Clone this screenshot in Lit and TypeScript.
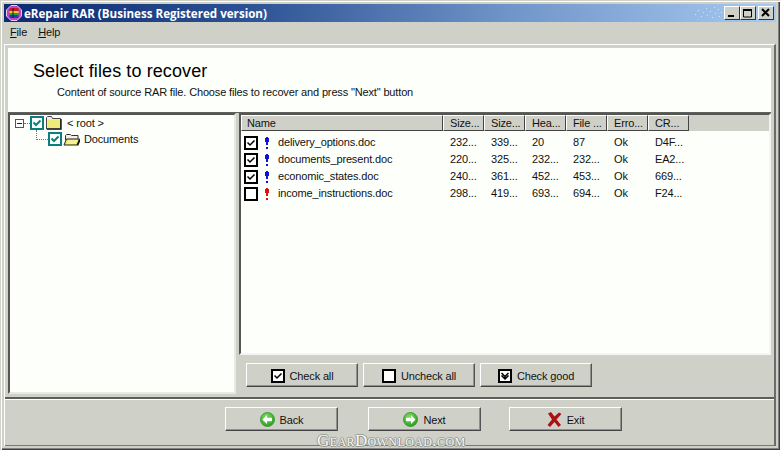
import { LitElement, html, css, svg } from "lit";
import { customElement } from "lit/decorators.js";

const check = (s: number, tone = "#000") => html`<svg class="ck" width=${s} height=${s} viewBox="0 0 14 14"><rect x="1" y="1" width="12" height="12" fill="#fff" stroke=${tone} stroke-width="2"/><path d="M3.500 6.500 6 9l4.500-4.500" fill="none" stroke=${tone} stroke-width="1.500"/></svg>`;
const empty = (s: number) => html`<svg class="ck" width=${s} height=${s} viewBox="0 0 14 14"><rect x="1" y="1" width="12" height="12" fill="#fff" stroke="#000" stroke-width="2"/></svg>`;
const good = html`<svg class="ck" width="14" height="14" viewBox="0 0 14 14"><rect x="1" y="1" width="12" height="12" fill="#fff" stroke="#000" stroke-width="2"/><path d="M3.500 4 7 7.500 10.500 4M3.500 6.500 7 10l3.500-3.500M7 8v3" fill="none" stroke="#000" stroke-width="1.500"/></svg>`;
const bang = (c: string) => html`<svg class="bang" width="4" height="12" viewBox="0 0 4 12"><path d="M1 0h2v1h1v4H3v3H1V5H0V1h1z" fill=${c}/><path d="M1 10h2v2H1z" fill=${c}/></svg>`;
const folder = (open: boolean) => html`<svg class="fold" width="17" height="14" viewBox="0 0 17 14">
  ${open
    ? svg`<path d="M2.500 8V3.500l1-1h4l1 1h6.500V7" fill="#f0f0e4" stroke="#333"/><path d="M1 13 3.500 7H16.500l-2.500 6z" fill="#eeea60" stroke="#222"/><path d="M14.500 13.500 17 7.500" stroke="#111" stroke-width="1.500"/><path d="M5 9h9M4 11h9" stroke="#fafad0"/>`
    : svg`<path d="M1.500 13V1.500l1-1h4l1 2h8v10.500z" fill="#f0f0e4" stroke="#444"/><path d="M2.500 3.500h12.500v8.500H2.500z" fill="#ecea78"/><path d="M16 3v10H2" fill="none" stroke="#222" stroke-width="1.500"/>`}
</svg>`;
const arrow = (id: string, d: string) => html`<svg width="15" height="15" viewBox="0 0 15 15"><defs><radialGradient id=${id} cx=".4" cy=".3" r=".8"><stop offset="0" stop-color="#7fdc5c"/><stop offset="1" stop-color="#1f9a1c"/></radialGradient></defs><circle cx="7.500" cy="7.500" r="7" fill="url(#${id})" stroke="#2f8f2a" stroke-width=".8"/><path d=${d} fill="#fff"/></svg>`;
const cross = html`<svg width="15" height="15" viewBox="0 0 15 15"><path d="M1 1.500 4 0l3.500 4.500L12 .5l2.500 1.500L9.500 7.500 14 13l-2.500 2-4-5L3 15 .5 13l4.500-5.500z" fill="#a81212"/></svg>`;
const speck = [[3,9],[6,5],[9,11],[11,7],[14,3],[15,10],[18,6],[20,12],[22,2],[23,8],[26,4],[27,11],[29,7]];

const cols = [["Name", 202], ["Size...", 41], ["Size...", 41], ["Hea...", 41], ["File ...", 41], ["Erro...", 41], ["CR...", 41]] as const;
const rows = [
  ["delivery_options.doc", "232...", "339...", "20", "87", "Ok", "D4F...", true, "#1010d8"],
  ["documents_present.doc", "220...", "325...", "232...", "232...", "Ok", "EA2...", true, "#1010d8"],
  ["economic_states.doc", "240...", "361...", "452...", "453...", "Ok", "669...", true, "#1010d8"],
  ["income_instructions.doc", "298...", "419...", "693...", "694...", "Ok", "F24...", false, "#e01010"],
] as const;

@customElement("app-root")
export class AppRoot extends LitElement {
  static styles = css`
    :host { display: block; width: 780px; height: 450px; overflow: hidden; font: 11px "Liberation Sans", Arial, sans-serif; letter-spacing: -.15px; color: #111; }
    .win { box-sizing: border-box; width: 780px; height: 450px; background: #cfd1c9; padding: 4px; position: relative; display: flex; flex-direction: column; box-shadow: inset 1px 1px 0 #cfd1c9, inset 2px 2px 0 #fff, inset -1px -1px 0 #404040, inset -2px -2px 0 #808080; }
    .title { flex: none; height: 18px; display: flex; align-items: center; gap: 2px; padding: 0 2px; background: linear-gradient(90deg, #0d2a72 0%, #2a4f92 30%, #6f94c8 65%, #a6caf0 100%); color: #fff; font: bold 11.600px "Open Sans", sans-serif; letter-spacing: 0; }
    .title span { flex: 1; white-space: nowrap; }
    .wb { width: 16px; height: 14px; box-sizing: border-box; background: #cfd1c9; border: 1px solid; border-color: #fff #333 #333 #fff; display: flex; align-items: center; justify-content: center; }
    .wb:last-child { margin-left: 2px; }
    .wbs { display: flex; }
    .menu { flex: none; box-sizing: border-box; height: 22px; display: flex; gap: 11px; align-items: center; padding: 0 0 2px 6px; }
    .menu u { text-decoration: underline; }
    .main { flex: 1; min-height: 0; display: flex; flex-direction: column; border-top: 1px solid #fff; border-left: 1px solid #fff; padding: 3px 3px 0 3px; border-right: 2px solid #6a6c68; }
    .head { flex: none; height: 64px; background: #fdfffb; box-sizing: border-box; padding: 13px 0 0 25px; }
    .head h1 { margin: 0; font: 400 18px "Liberation Sans", Arial, sans-serif; letter-spacing: .1px; color: #000; line-height: 20px; }
    .head p { margin: 5px 0 0 24px; line-height: 13px; }
    .mid { flex: none; box-sizing: border-box; height: 285px; display: flex; border-top: 1px solid #5f615d; gap: 3px; }
    .tree { flex: none; width: 228px; height: 281px; box-sizing: border-box; background: #fdfffb; border: 2px solid; border-color: #555 #e8e8e4 #e8e8e4 #555; padding: 0 0 0 5px; }
    .tr { display: flex; align-items: center; height: 16px; }
    .tr.sub { padding-left: 33px; }
    .exp { width: 7px; height: 7px; border: 1px solid #555; position: relative; background: #fff; }
    .exp::after { content: ""; position: absolute; left: 1px; right: 1px; top: 3px; height: 1px; background: #222; }
    .dots { width: 6px; border-top: 1px dotted #777; }
    .corner { flex: none; width: 11px; height: 9px; border-left: 1px dotted #777; border-bottom: 1px dotted #777; margin: -9px 0 0 -12px; }
    .tck { flex: none; width: 14px; height: 14px; box-sizing: border-box; border: 2px solid #0a7f7f; background: #fff; display: flex; align-items: center; justify-content: center; margin-right: 1px; }
    .fold { margin-right: 5px; flex: none; }
    .sub .fold { margin-right: 4px; }
    .right { flex: 1; display: flex; flex-direction: column; min-width: 0; }
    .list { height: 242px; flex: none; box-sizing: border-box; background: #fdfffb; border: 2px solid; border-color: #555 #f4f4f0 #f4f4f0 #555; }
    .hdr { display: flex; height: 16px; background: #cfd1c9; margin-bottom: 3px; }
    .hc { box-sizing: border-box; height: 16px; border: 1px solid; border-color: #fff #444 #444 #fff; line-height: 14px; padding-left: 6px; white-space: nowrap; overflow: hidden; }
    .hc.name { padding-left: 5px; }
    .row { display: flex; align-items: center; height: 17px; padding-left: 3px; }
    .row .ck { flex: none; margin-right: 7px; }
    .row .bang { flex: none; margin-right: 9px; }
    .fn { width: 165px; flex: none; white-space: nowrap; padding-bottom: 2px; }
    .v { width: 41px; flex: none; padding: 0 0 2px 7px; box-sizing: border-box; }
    .rbar { display: flex; gap: 5px; padding: 8px 0 0 7px; }
    .btn { box-sizing: border-box; height: 24px; flex: none; display: flex; align-items: center; justify-content: center; gap: 5px; padding-top: 1px; background: #cfd1c9; border: 1px solid; border-color: #fff #555 #444 #fff; box-shadow: inset -1px -1px 0 #8f918b; }
    .btn.s { width: 112px; }
    .bot { flex: 1; min-height: 0; border-top: 2px solid #5c5e5a; border-bottom: 1px solid #777; margin: 0 -3px; box-shadow: inset 0 1px 0 #fff; display: flex; align-items: flex-start; padding: 8px 0 0 220px; }
    .bb { display: flex; gap: 30px; }
    .btn.l { width: 113px; }
    .btn.exit { margin-left: -2px; }
    .wm { position: absolute; left: 317px; top: 431px; font: 400 17px "Liberation Serif", serif; font-variant: small-caps; letter-spacing: .4px; color: #f8f8f4; text-shadow: 1px 0 0 #8f918b, 0 1px 0 #8f918b, -1px 0 0 #9a9c96, 0 -1px 0 #9a9c96; white-space: nowrap; }
  `;
  render() {
    return html`<div class="win">
      <div class="title">
        <svg width="16" height="16" viewBox="0 0 16 16"><path d="M5 .500h6l4.500 4.500v6L11 15.500H5L.5 11V5z" fill="#c040c8" stroke="#e8c8f0"/><rect x="3.500" y="3" width="9" height="3" fill="#c02020"/><rect x="3.500" y="6" width="9" height="2" fill="#e8d020"/><rect x="3.500" y="8" width="9" height="2" fill="#20a040"/><rect x="3.500" y="10" width="9" height="3" fill="#2040b0"/><path d="M7 3v10" stroke="#301040"/></svg>
        <span>eRepair RAR (Business Registered version)</span>
        <svg width="30" height="16" viewBox="0 0 30 16">${speck.map(([x, y]) => svg`<rect x=${x} y=${y} width="1" height="1" fill="#d4e4f6"/>`)}</svg>
        <div class="wbs">
          <div class="wb"><svg width="10" height="10" viewBox="0 0 10 10"><path d="M1 7h6v2H1z"/></svg></div>
          <div class="wb"><svg width="10" height="10" viewBox="0 0 10 10"><path d="M.500 1.500h8v7.500h-8z" fill="none" stroke="#000"/><path d="M0 1h9v2H0z"/></svg></div>
          <div class="wb"><svg width="10" height="10" viewBox="0 0 10 10"><path d="M1 1l7 7M8 1 1 8" stroke="#000" stroke-width="2"/></svg></div>
        </div>
      </div>
      <div class="menu"><span><u>F</u>ile</span><span><u>H</u>elp</span></div>
      <div class="main">
        <div class="head"><h1>Select files to recover</h1><p>Content of source RAR file. Choose files to recover and press "Next" button</p></div>
        <div class="mid">
          <div class="tree">
            <div class="tr"><div class="exp"></div><div class="dots"></div><div class="tck">${this.tick()}</div>${folder(false)}<span>&lt; root &gt;</span></div>
            <div class="tr sub"><div class="corner"></div><div class="tck">${this.tick()}</div>${folder(true)}<span>Documents</span></div>
          </div>
          <div class="right">
            <div class="list">
              <div class="hdr">${cols.map(([t, w], i) => html`<div class="hc ${i === 0 ? "name" : ""}" style="width:${w}px">${t}</div>`)}</div>
              ${rows.map((r) => html`<div class="row">${r[7] ? check(14) : empty(14)}${bang(r[8])}<div class="fn">${r[0]}</div>${r.slice(1, 7).map((v) => html`<div class="v">${v}</div>`)}</div>`)}
            </div>
            <div class="rbar">
              <div class="btn s">${check(14)}<span>Check all</span></div>
              <div class="btn s">${empty(14)}<span>Uncheck all</span></div>
              <div class="btn s">${good}<span>Check good</span></div>
            </div>
          </div>
        </div>
        <div class="bot"><div class="bb">
          <div class="btn l">${arrow("ga", "M2.500 7.500 7 3v2.800h5v3.400H7V12z")}<span>Back</span></div>
          <div class="btn l">${arrow("gb", "M12.500 7.500 8 3v2.800H3v3.400h5V12z")}<span>Next</span></div>
          <div class="btn l exit">${cross}<span>Exit</span></div>
        </div></div>
      </div>
      <div class="wm">GearDownload.com</div>
    </div>`;
  }
  tick() {
    return html`<svg width="10" height="10" viewBox="0 0 10 10"><path d="M1.500 4.500 4 7l4.500-4.500" fill="none" stroke="#0a7f7f" stroke-width="2"/></svg>`;
  }
}
